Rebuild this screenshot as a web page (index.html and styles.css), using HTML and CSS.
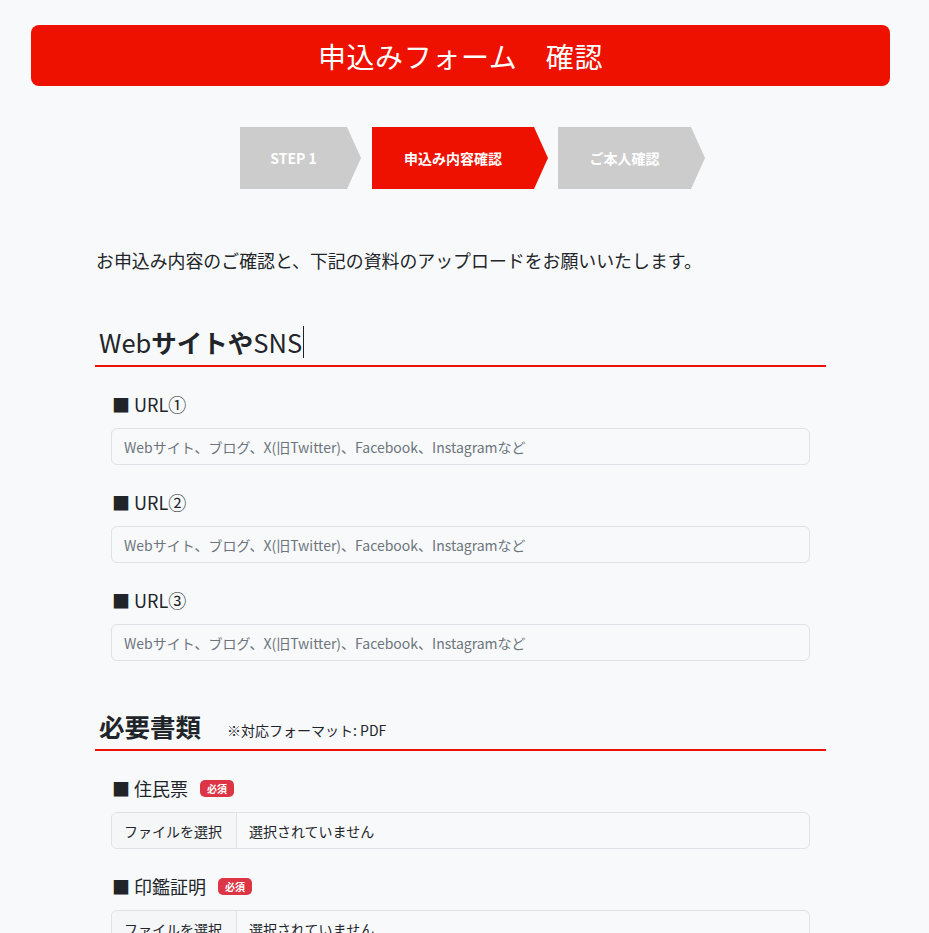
FILE: index.html
```html
<!DOCTYPE html>
<html lang="ja">
<head>
<meta charset="utf-8">
<title>申込みフォーム 確認</title>
<link rel="stylesheet" href="styles.css">
</head>
<body>
<header class="title-bar">
  <h1 class="title">申込みフォーム　確認</h1>
</header>

<nav class="steps">
  <div class="step step-1">STEP 1</div>
  <div class="step step-2 active">申込み内容確認</div>
  <div class="step step-3">ご本人確認</div>
</nav>

<main class="container">
  <p class="intro">お申込み内容のご確認と、下記の資料のアップロードをお願いいたします。</p>

  <section class="section section-sns">
    <h2 class="section-title"><span class="latin">Web</span>サイトや<span class="latin">SNS</span><span class="caret"></span></h2>
    <div class="field">
      <label class="field-label">■ URL①</label>
      <input class="text-input" type="text" placeholder="Webサイト、ブログ、X(旧Twitter)、Facebook、Instagramなど">
    </div>
    <div class="field">
      <label class="field-label">■ URL②</label>
      <input class="text-input" type="text" placeholder="Webサイト、ブログ、X(旧Twitter)、Facebook、Instagramなど">
    </div>
    <div class="field">
      <label class="field-label">■ URL③</label>
      <input class="text-input" type="text" placeholder="Webサイト、ブログ、X(旧Twitter)、Facebook、Instagramなど">
    </div>
  </section>

  <section class="section">
    <h2 class="section-title">必要書類<span class="format-note">※対応フォーマット: PDF</span></h2>
    <div class="field">
      <label class="field-label">■ 住民票<span class="badge">必須</span></label>
      <div class="file-input"><span class="file-btn">ファイルを選択</span><span class="file-name">選択されていません</span></div>
    </div>
    <div class="field">
      <label class="field-label">■ 印鑑証明<span class="badge">必須</span></label>
      <div class="file-input"><span class="file-btn">ファイルを選択</span><span class="file-name">選択されていません</span></div>
    </div>
  </section>
</main>
</body>
</html>
```

FILE: styles.css
```css
* { box-sizing: border-box; }
html, body {
  margin: 0;
  padding: 0;
  background: #f8f9fa;
  color: #212529;
  font-family: "Noto Sans CJK JP", "Noto Sans", sans-serif;
}
body { padding: 25px 39px 40px 31px; }

.title-bar {
  background: #ee1100;
  border-radius: 8px;
  height: 61px;
  display: flex;
  align-items: center;
  justify-content: center;
}
.title {
  margin: 0;
  color: #fff;
  font-size: 28px;
  font-weight: 400;
  line-height: 1;
  letter-spacing: 0.6px;
}

.steps {
  display: flex;
  margin: 41px 0 0 209px;
  gap: 11px;
}
.step {
  height: 62px;
  background: #cccccc;
  color: #fff;
  font-size: 14px;
  font-weight: 700;
  display: flex;
  align-items: center;
  justify-content: center;
  padding-right: 14px;
  clip-path: polygon(0 0, calc(100% - 14px) 0, 100% 50%, calc(100% - 14px) 100%, 0 100%);
}
.step.active { background: #ee1100; }
.step-1 { width: 121px; }
.step-2 { width: 176px; }
.step-3 { width: 147px; margin-left: -1px; }

.container {
  width: 731px;
  margin-left: 64px;
}
.intro {
  margin: 58px 0 0 1px;
  font-size: 17.9px;
  line-height: 26px;
}

.section { margin-top: 50px; }
.section-sns { margin-top: 54px; }
.section-title {
  margin: 0;
  height: 40px;
  padding: 0 0 8px 4px;
  font-size: 25.5px;
  line-height: 30px;
  font-weight: 700;
  border-bottom: 2px solid #ee1100;
  display: flex;
  align-items: center;
}
.latin { font-weight: 400; }
.caret {
  display: inline-block;
  width: 1px;
  height: 32px;
  background: #222;
  margin-left: 1px;
}
.format-note {
  font-size: 14px;
  line-height: 20px;
  font-weight: 400;
  margin-left: 26px;
  padding-top: 8px;
}

.field {
  padding: 0 16px;
  margin-top: 24px;
}
.field-label {
  display: flex;
  align-items: center;
  height: 27px;
  font-size: 18px;
  line-height: 27px;
  margin-bottom: 10px;
  padding-left: 1px;
}
.badge {
  display: inline-block;
  margin-left: 12px;
  background: #dc3545;
  color: #fff;
  font-size: 10px;
  font-weight: 700;
  line-height: 17px;
  height: 17px;
  padding: 0 7px;
  border-radius: 5px;
}
.text-input {
  display: block;
  width: 100%;
  height: 37px;
  padding: 7px 12px;
  font-family: inherit;
  font-size: 14px;
  color: #212529;
  background: #f8f9fa;
  border: 1px solid #dee2e6;
  border-radius: 6px;
  outline: none;
}
.text-input::placeholder { color: #6c757d; }

.file-input {
  display: flex;
  height: 37px;
  border: 1px solid #dee2e6;
  border-radius: 6px;
  font-size: 14px;
  overflow: hidden;
}
.file-btn {
  display: flex;
  align-items: center;
  padding: 0 12px;
  width: 125px;
  background: #f5f6f7;
  border-right: 1px solid #dee2e6;
  white-space: nowrap;
}
.file-name {
  display: flex;
  align-items: center;
  padding-left: 12px;
}
```
